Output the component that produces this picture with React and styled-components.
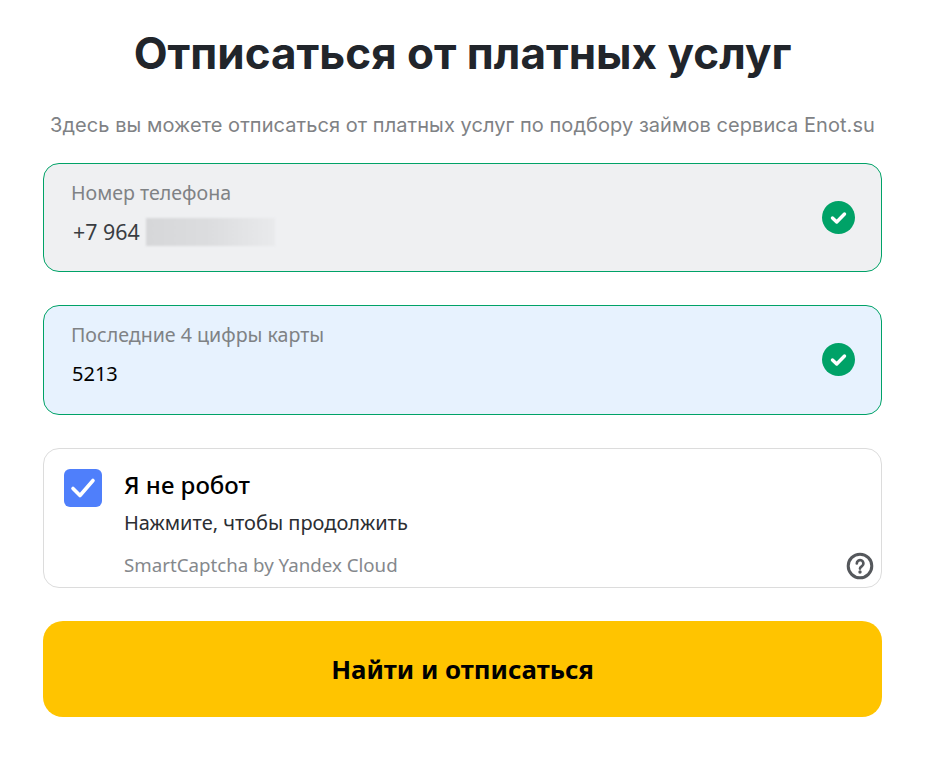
import React from "react";
import styled, { createGlobalStyle } from "styled-components";

const Global = createGlobalStyle`
  html, body { margin: 0; padding: 0; background: #fff; }
  body { font-family: "Noto Sans", "Liberation Sans", sans-serif; }
`;

const Page = styled.div`
  width: 927px;
  height: 758px;
  box-sizing: border-box;
  padding: 26px 45px 0 43px;
  overflow: hidden;
`;

const Title = styled.h1`
  margin: 0;
  font-family: "Inter", sans-serif;
  font-size: 44px;
  line-height: 54px;
  font-weight: 700;
  color: #21252b;
  text-align: center;
`;

const Subtitle = styled.p`
  margin: 32px 0 0;
  font-family: "Inter", sans-serif;
  font-size: 20px;
  line-height: 26px;
  letter-spacing: 0.06px;
  color: #7f8285;
  text-align: center;
  white-space: nowrap;
`;

const Field = styled.div`
  box-sizing: border-box;
  height: ${(p) => p.$height}px;
  margin-top: ${(p) => p.$top}px;
  padding: 16px 26px 0 27px;
  display: flex;
  align-items: flex-start;
  justify-content: space-between;
  border: 1px solid #00a267;
  border-radius: 16px;
  background: ${(p) => p.$bg};
`;

const FieldBody = styled.div`
  display: flex;
  flex-direction: column;
  gap: 12px;
`;

const Label = styled.div`
  font-size: 19.6px;
  line-height: 26px;
  color: #7f8285;
`;

const Value = styled.div`
  display: flex;
  align-items: center;
  gap: 6px;
  margin-left: 1px;
  font-size: 20px;
  line-height: 28px;
  color: ${(p) => p.$color};
`;

const PhonePrefix = styled.span`
  margin-left: 1px;
  font-size: 21.4px;
`;

const Blur = styled.span`
  display: block;
  width: 129px;
  height: 28px;
  background: linear-gradient(90deg, #d6d7d9, #dcdddf 50%, #e9eaec);
  filter: blur(1px);
`;

const CheckWrap = styled.div`
  margin-top: 21px;
  width: 33px;
  height: 33px;
`;

const Captcha = styled.div`
  position: relative;
  box-sizing: border-box;
  height: 140px;
  margin-top: 33px;
  padding: 20px 0 0 20px;
  display: flex;
  gap: 22px;
  border: 1px solid #dcdcdc;
  border-radius: 16px;
`;

const Box = styled.div`
  width: 38px;
  height: 38px;
  border-radius: 6px;
  background: #4f7ffb;
  display: flex;
  align-items: center;
  justify-content: center;
`;

const CaptchaText = styled.div`
  display: flex;
  flex-direction: column;
`;

const CaptchaTitle = styled.div`
  font-size: 24px;
  line-height: 32px;
  font-weight: 500;
  color: #000;
`;

const CaptchaHint = styled.div`
  margin-top: 9px;
  font-size: 20px;
  line-height: 26px;
  color: #2b2e33;
`;

const CaptchaBrand = styled.div`
  margin-top: 16px;
  font-size: 18.7px;
  line-height: 26px;
  color: #85888c;
`;

const Help = styled.div`
  position: absolute;
  right: 7px;
  bottom: 7px;
  width: 28px;
  height: 28px;
`;

const Submit = styled.button`
  display: block;
  width: 100%;
  height: 96px;
  margin-top: 33px;
  border: 0;
  border-radius: 20px;
  background: #ffc400;
  font-family: "Noto Sans", sans-serif;
  font-size: 25.8px;
  font-weight: 700;
  color: #000;
`;

const Check = () => (
  <svg width="33" height="33" viewBox="0 0 33 33">
    <circle cx="16.5" cy="16.5" r="16.5" fill="#00a267" />
    <path d="M10.5 17l4.2 4L22.5 13" fill="none" stroke="#fff" strokeWidth="3.4" strokeLinecap="round" strokeLinejoin="round" />
  </svg>
);

export default function App() {
  return (
    <Page>
      <Global />
      <Title>Отписаться от платных услуг</Title>
      <Subtitle>Здесь вы можете отписаться от платных услуг по подбору займов сервиса Enot.su</Subtitle>
      <Field $height={109} $top={25} $bg="#eff0f2">
        <FieldBody>
          <Label>Номер телефона</Label>
          <Value $color="#3a3d42">
            <PhonePrefix>+7 964</PhonePrefix>
            <Blur />
          </Value>
        </FieldBody>
        <CheckWrap><Check /></CheckWrap>
      </Field>
      <Field $height={110} $top={33} $bg="#e7f2fe">
        <FieldBody>
          <Label>Последние 4 цифры карты</Label>
          <Value $color="#000">5213</Value>
        </FieldBody>
        <CheckWrap><Check /></CheckWrap>
      </Field>
      <Captcha>
        <Box>
          <svg width="28" height="24" viewBox="0 0 28 24">
            <path d="M4 12.5l7 7L24 4.5" fill="none" stroke="#fff" strokeWidth="3.6" strokeLinecap="round" strokeLinejoin="round" />
          </svg>
        </Box>
        <CaptchaText>
          <CaptchaTitle>Я не робот</CaptchaTitle>
          <CaptchaHint>Нажмите, чтобы продолжить</CaptchaHint>
          <CaptchaBrand>SmartCaptcha by Yandex Cloud</CaptchaBrand>
        </CaptchaText>
        <Help>
          <svg width="28" height="28" viewBox="0 0 28 28">
            <circle cx="14" cy="14" r="11.8" fill="none" stroke="#55585c" strokeWidth="3" />
            <path d="M10.8 11.4a3.3 3.3 0 1 1 5.3 2.6c-1.3.9-2.1 1.4-2.1 2.6" fill="none" stroke="#55585c" strokeWidth="2.7" strokeLinecap="round" />
            <circle cx="14" cy="20" r="1.7" fill="#55585c" />
          </svg>
        </Help>
      </Captcha>
      <Submit>Найти и отписаться</Submit>
    </Page>
  );
}
